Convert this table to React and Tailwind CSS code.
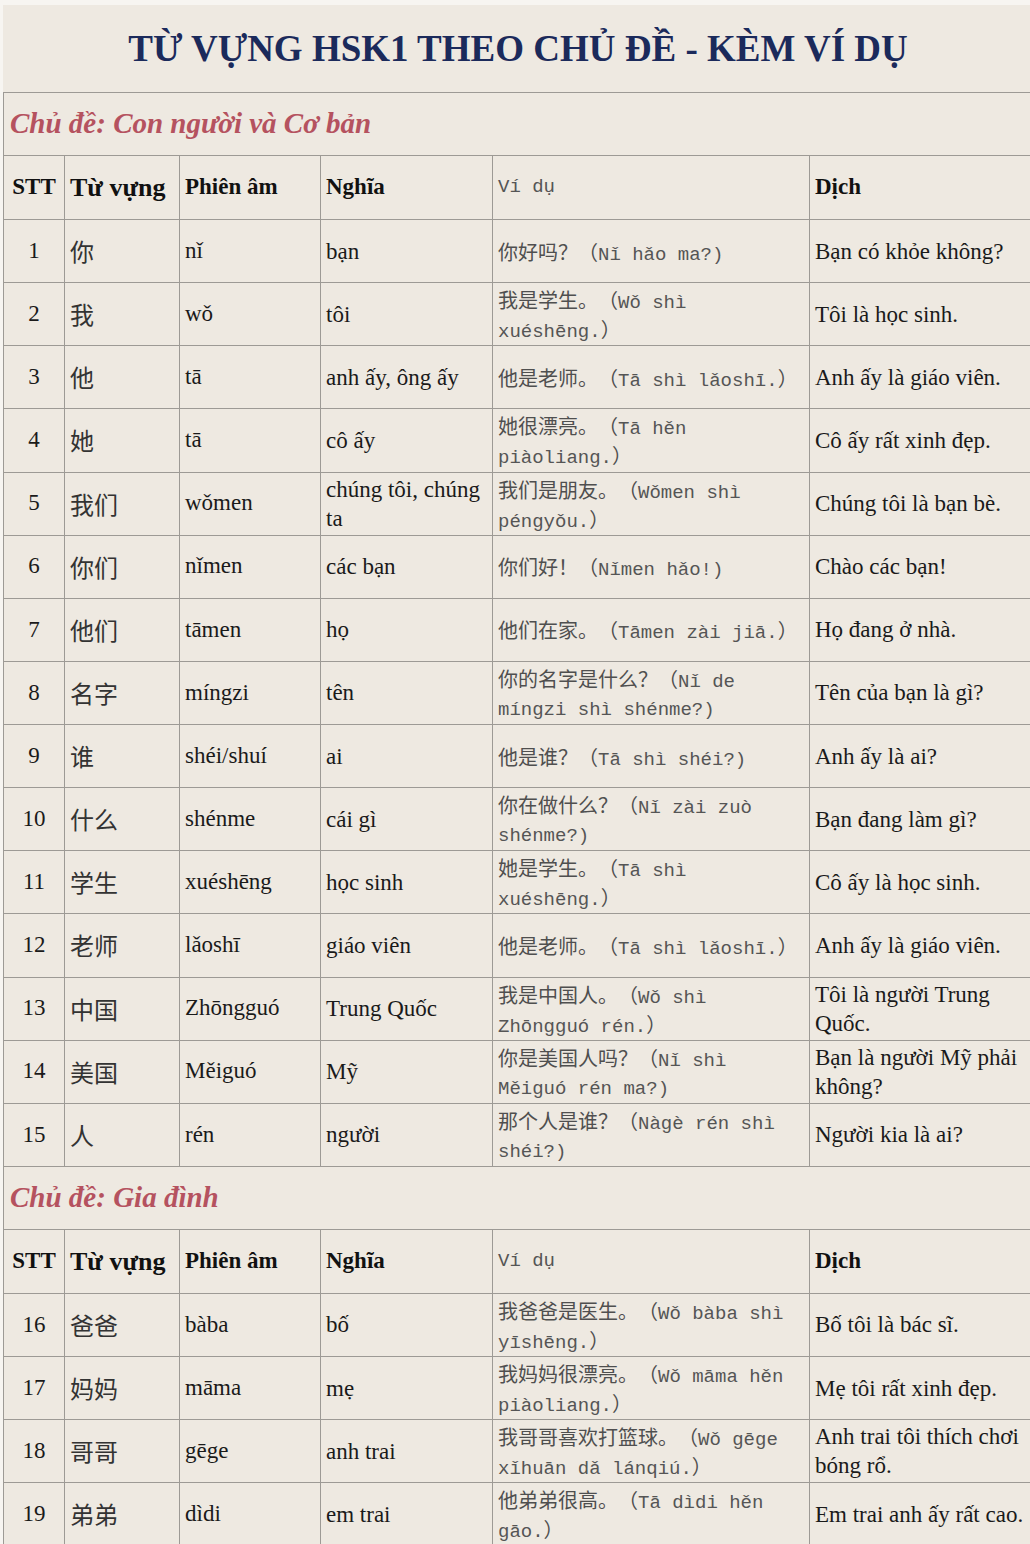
import React from 'react';

const serif = "font-['Liberation_Serif','Times_New_Roman','Noto_Sans_CJK_SC',serif]";

const section1 = [
  { n: 1, zh: '你', py: 'nǐ', vi: ['bạn'], ex: ['你好吗？（Nǐ hǎo ma?)'], tr: ['Bạn có khỏe không?'] },
  { n: 2, zh: '我', py: 'wǒ', vi: ['tôi'], ex: ['我是学生。（Wǒ shì', 'xuéshēng.）'], tr: ['Tôi là học sinh.'] },
  { n: 3, zh: '他', py: 'tā', vi: ['anh ấy, ông ấy'], ex: ['他是老师。（Tā shì lǎoshī.）'], tr: ['Anh ấy là giáo viên.'] },
  { n: 4, zh: '她', py: 'tā', vi: ['cô ấy'], ex: ['她很漂亮。（Tā hěn', 'piàoliang.）'], tr: ['Cô ấy rất xinh đẹp.'] },
  { n: 5, zh: '我们', py: 'wǒmen', vi: ['chúng tôi, chúng', 'ta'], ex: ['我们是朋友。（Wǒmen shì', 'péngyǒu.）'], tr: ['Chúng tôi là bạn bè.'] },
  { n: 6, zh: '你们', py: 'nǐmen', vi: ['các bạn'], ex: ['你们好！（Nǐmen hǎo!)'], tr: ['Chào các bạn!'] },
  { n: 7, zh: '他们', py: 'tāmen', vi: ['họ'], ex: ['他们在家。（Tāmen zài jiā.）'], tr: ['Họ đang ở nhà.'] },
  { n: 8, zh: '名字', py: 'míngzi', vi: ['tên'], ex: ['你的名字是什么？（Nǐ de', 'míngzi shì shénme?)'], tr: ['Tên của bạn là gì?'] },
  { n: 9, zh: '谁', py: 'shéi/shuí', vi: ['ai'], ex: ['他是谁？（Tā shì shéi?)'], tr: ['Anh ấy là ai?'] },
  { n: 10, zh: '什么', py: 'shénme', vi: ['cái gì'], ex: ['你在做什么？（Nǐ zài zuò', 'shénme?)'], tr: ['Bạn đang làm gì?'] },
  { n: 11, zh: '学生', py: 'xuéshēng', vi: ['học sinh'], ex: ['她是学生。（Tā shì', 'xuéshēng.）'], tr: ['Cô ấy là học sinh.'] },
  { n: 12, zh: '老师', py: 'lǎoshī', vi: ['giáo viên'], ex: ['他是老师。（Tā shì lǎoshī.）'], tr: ['Anh ấy là giáo viên.'] },
  { n: 13, zh: '中国', py: 'Zhōngguó', vi: ['Trung Quốc'], ex: ['我是中国人。（Wǒ shì', 'Zhōngguó rén.）'], tr: ['Tôi là người Trung', 'Quốc.'] },
  { n: 14, zh: '美国', py: 'Měiguó', vi: ['Mỹ'], ex: ['你是美国人吗？（Nǐ shì', 'Měiguó rén ma?)'], tr: ['Bạn là người Mỹ phải', 'không?'] },
  { n: 15, zh: '人', py: 'rén', vi: ['người'], ex: ['那个人是谁？（Nàgè rén shì', 'shéi?)'], tr: ['Người kia là ai?'] },
];

const section2 = [
  { n: 16, zh: '爸爸', py: 'bàba', vi: ['bố'], ex: ['我爸爸是医生。（Wǒ bàba shì', 'yīshēng.）'], tr: ['Bố tôi là bác sĩ.'] },
  { n: 17, zh: '妈妈', py: 'māma', vi: ['mẹ'], ex: ['我妈妈很漂亮。（Wǒ māma hěn', 'piàoliang.）'], tr: ['Mẹ tôi rất xinh đẹp.'] },
  { n: 18, zh: '哥哥', py: 'gēge', vi: ['anh trai'], ex: ['我哥哥喜欢打篮球。（Wǒ gēge', 'xǐhuān dǎ lánqiú.）'], tr: ['Anh trai tôi thích chơi', 'bóng rổ.'] },
  { n: 19, zh: '弟弟', py: 'dìdi', vi: ['em trai'], ex: ['他弟弟很高。（Tā dìdi hěn', 'gāo.）'], tr: ['Em trai anh ấy rất cao.'] },
];

const CJK = /([\u3000-\u303f\u4e00-\u9fff\uff00-\uffef]+)/;

// split an example line into CJK runs and latin runs (latin drawn in a mono face)
const ExLine = ({ text }) => {
  const parts = text.split(CJK).filter(Boolean);
  return (
    <div className="h-[29px] leading-[29px] whitespace-pre [text-spacing-trim:space-all]">
      {parts.map((p, i) =>
        CJK.test(p) ? (
          <span key={i} className="font-['Noto_Sans_CJK_SC',sans-serif] text-[20px] leading-[29px] text-[#4f4f4f]">{p}</span>
        ) : (
          <span key={i} className="font-['Liberation_Mono','DejaVu_Sans_Mono',monospace] text-[19px] leading-[29px]">{p}</span>
        )
      )}
    </div>
  );
};

const Lines = ({ lines }) => (
  <div className="leading-[29px] whitespace-nowrap">
    {lines.map((l, i) => <div key={i} className="h-[29px]">{l}</div>)}
  </div>
);

const cell = 'border border-[#9d9a95] px-[5px] align-middle';

const SectionRows = ({ title, rows }) => (
  <>
    <tr className="h-[63px]">
      <td colSpan={6} className="border border-[#9d9a95] px-[6px] align-middle">
        <span className={`${serif} italic font-bold text-[29px] text-[#b5525f]`}>{title}</span>
      </td>
    </tr>
    <tr className="h-[64px] text-[23px] text-[#111]">
      <td className={`${cell} font-bold text-center`}>STT</td>
      <td className={`${cell} font-bold text-[26px]`}>Từ vựng</td>
      <td className={`${cell} font-bold`}>Phiên âm</td>
      <td className={`${cell} font-bold`}>Nghĩa</td>
      <td className={`${cell} text-[#555] font-['Liberation_Mono','DejaVu_Sans_Mono',monospace] text-[19px]`}>Ví dụ</td>
      <td className={`${cell} font-bold`}>Dịch</td>
    </tr>
    {rows.map((r) => (
      <tr key={r.n} className="h-[63.13px] text-[23px] text-[#1a1a1a]">
        <td className={`${cell} text-center`}>{r.n}</td>
        <td className={`${cell} font-['Noto_Sans_CJK_SC',sans-serif] text-[24px] text-[#333]`}>{r.zh}</td>
        <td className={cell}>{r.py}</td>
        <td className={cell}><Lines lines={r.vi} /></td>
        <td className={`${cell} text-[#555]`}>
          {r.ex.map((l, i) => <ExLine key={i} text={l} />)}
        </td>
        <td className={cell}><Lines lines={r.tr} /></td>
      </tr>
    ))}
  </>
);

export default function App() {
  return (
    <div className="w-[1030px] h-[1544px] overflow-hidden bg-[#f7f5f1] pl-[3px] pt-[5px]">
      <div className={`${serif} bg-[#eee9e1] w-[1040px] h-full`}>
        <div className="h-[87px] w-[1030px] flex items-center justify-center">
          <h1 className="text-[37px] font-bold text-[#1b2a5b]">TỪ VỰNG HSK1 THEO CHỦ ĐỀ - KÈM VÍ DỤ</h1>
        </div>
        <table className="table-fixed border-collapse w-[1040px]">
          <colgroup>
            <col className="w-[61px]" />
            <col className="w-[115px]" />
            <col className="w-[141px]" />
            <col className="w-[172px]" />
            <col className="w-[317px]" />
            <col className="w-[234px]" />
          </colgroup>
          <tbody>
            <SectionRows title="Chủ đề: Con người và Cơ bản" rows={section1} />
            <SectionRows title="Chủ đề: Gia đình" rows={section2} />
          </tbody>
        </table>
      </div>
    </div>
  );
}
